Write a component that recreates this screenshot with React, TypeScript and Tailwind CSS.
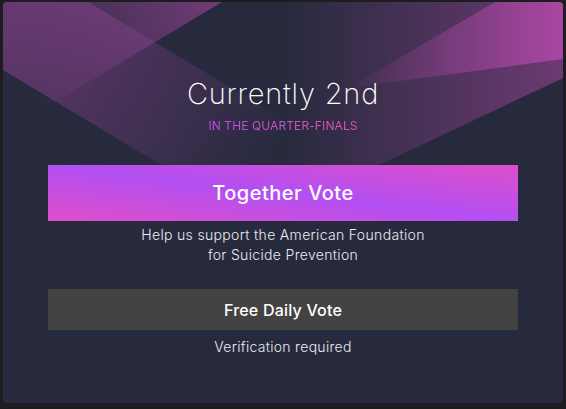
import React from "react";

function Backdrop() {
  return (
    <svg
      className="absolute inset-0 h-full w-full"
      viewBox="0 0 560 401"
      preserveAspectRatio="none"
      aria-hidden="true"
    >
      <defs>
        <linearGradient id="zFade" x1="219" y1="0" x2="40" y2="110" gradientUnits="userSpaceOnUse">
          <stop offset="0" stopColor="#b04aa8" stopOpacity="0.55" />
          <stop offset="1" stopColor="#b04aa8" stopOpacity="0" />
        </linearGradient>
        <linearGradient id="yFade" x1="0" y1="30" x2="260" y2="180" gradientUnits="userSpaceOnUse">
          <stop offset="0" stopColor="#a848a8" stopOpacity="0.45" />
          <stop offset="1" stopColor="#a848a8" stopOpacity="0" />
        </linearGradient>
        <linearGradient id="qFade" x1="280" y1="0" x2="560" y2="0" gradientUnits="userSpaceOnUse">
          <stop offset="0" stopColor="#b04aa8" stopOpacity="0" />
          <stop offset="1" stopColor="#b04aa8" stopOpacity="0.5" />
        </linearGradient>
        <linearGradient id="pFade" x1="340" y1="0" x2="560" y2="0" gradientUnits="userSpaceOnUse">
          <stop offset="0" stopColor="#d04fc0" stopOpacity="0" />
          <stop offset="1" stopColor="#d04fc0" stopOpacity="0.6" />
        </linearGradient>
      </defs>
      <polygon points="0,0 219,0 0,131" fill="url(#zFade)" />
      <polygon points="0,0 85,0 400,189 400,308 0,68" fill="url(#yFade)" />
      <polygon points="230,0 560,0 560,76 300,199" fill="url(#qFade)" />
      <polygon points="492,0 560,0 560,57 345,86" fill="url(#pFade)" />
    </svg>
  );
}

export default function App() {
  return (
    <div
      className="flex h-[409px] w-[566px] bg-[#1d1d21] pl-[3px] pt-[2px]"
      style={{ fontFamily: "Inter, 'Noto Sans', sans-serif" }}
    >
      <div className="relative h-[401px] w-[560px] overflow-hidden rounded-[4px] bg-[#272a3d]">
        <Backdrop />
        <div className="relative flex flex-col items-center px-[45px] pt-[72px]">
          <h1 className="text-[29px] font-extralight leading-[40px] tracking-[0.8px] text-white">
            Currently 2nd
          </h1>
          <p className="mt-[3px] bg-gradient-to-r from-[#b84fe4] to-[#e04fb4] bg-clip-text text-[12px] font-normal uppercase leading-[18px] tracking-[0.1px] text-transparent">
            In the Quarter-Finals
          </p>
          <button className="mt-[30px] flex h-[56px] w-full items-center justify-center bg-[linear-gradient(to_top_right,#de4fca,#b34ff2,#de4fca)] text-[20px] font-medium tracking-[0.5px] text-white">
            Together Vote
          </button>
          <p className="mt-[4px] text-center text-[14px] font-light leading-[20px] tracking-[0.33px] text-[#ebebf2]">
            Help us support the American Foundation
            <br />
            for Suicide Prevention
          </p>
          <button className="mt-[24px] flex h-[41px] w-full items-center justify-center bg-[#434343] text-[16px] font-medium tracking-[0.2px] text-white">
            Free Daily Vote
          </button>
          <p className="mt-[7px] text-[14px] font-light leading-[20px] tracking-[0.3px] text-[#ebebf2]">
            Verification required
          </p>
        </div>
      </div>
    </div>
  );
}
